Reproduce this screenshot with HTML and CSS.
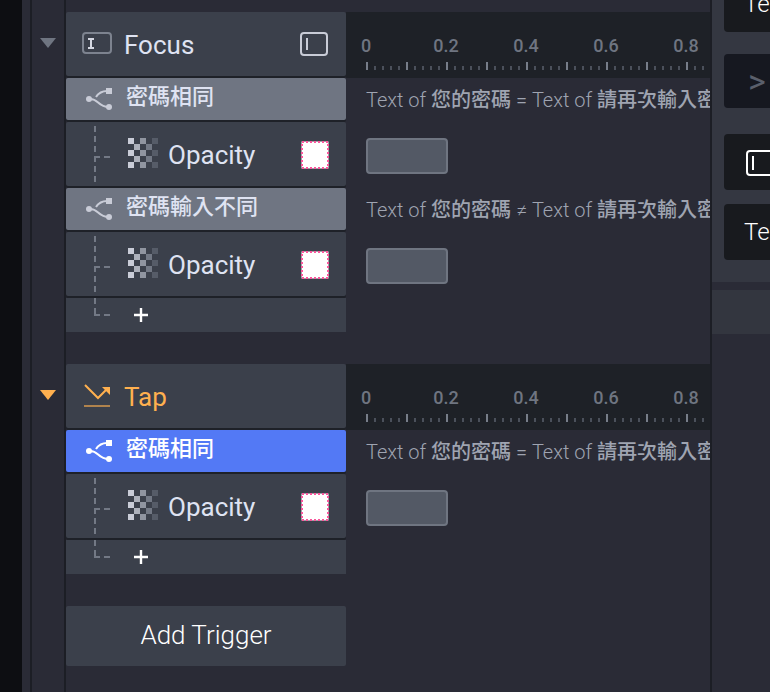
FILE: index.html
```
<!DOCTYPE html>
<html lang="zh-Hant">
<head>
<meta charset="utf-8">
<title>Triggers</title>
<meta name="viewport" content="width=device-width, initial-scale=1">
<link rel="stylesheet" href="styles.css">
</head>
<body>
<svg class="defs" aria-hidden="true">
  <symbol id="branch" viewBox="0 0 28 24">
    <circle cx="4" cy="12" r="3" fill="currentColor"/>
    <rect x="21" y="1" width="6" height="6" fill="currentColor"/>
    <circle cx="24" cy="20" r="3" fill="currentColor"/>
    <path d="M4 12C14 11 12 20 24 20M11 10Q15 4 22 4" fill="none" stroke="currentColor" stroke-width="2"/>
  </symbol>
  <symbol id="checker" viewBox="0 0 30 30">
    <path fill="#c9ccd7" d="M0 0h6v6H0zM0 12h6v6H0zM0 24h6v6H0z"/>
    <path fill="#adb1bb" d="M6 6h6v6H6zM6 18h6v6H6z"/>
    <path fill="#9095a0" d="M12 0h6v6h-6zM12 12h6v6h-6zM12 24h6v6h-6z"/>
    <path fill="#737985" d="M18 6h6v6h-6zM18 18h6v6h-6z"/>
    <path fill="#565c68" d="M24 0h6v6h-6zM24 12h6v6h-6zM24 24h6v6h-6z"/>
  </symbol>
  <symbol id="tree" viewBox="0 0 16 64">
    <path d="M1 4V60" fill="none" stroke="#737985" stroke-width="2" stroke-dasharray="6 4"/>
    <path d="M0 35H16" fill="none" stroke="#737985" stroke-width="2" stroke-dasharray="6 4"/>
  </symbol>
  <symbol id="tree-end" viewBox="0 0 16 34">
    <path d="M1 0V6M1 10V17H6M10 17H16" fill="none" stroke="#737985" stroke-width="2"/>
  </symbol>
  <symbol id="swatch" viewBox="0 0 28 28">
    <rect x="0.5" y="0.5" width="27" height="27" fill="#fff"/>
    <rect x="1" y="1" width="26" height="26" fill="none" stroke="#f9579c" stroke-width="2" stroke-dasharray="2 2"/>
  </symbol>
  <symbol id="plus" viewBox="0 0 14 14">
    <path d="M7 0V14M0 7H14" stroke="currentColor" stroke-width="2.4"/>
  </symbol>
</svg>
<div class="app">
  <div class="canvas-edge"></div>
  <main class="triggers">
    <section class="group">
      <div class="gutter"><button class="toggle" aria-label="Collapse Focus"></button></div>
      <div class="rows">
        <div class="row">
          <header class="cell head">
            <svg class="head-icon" viewBox="0 0 30 26" aria-hidden="true"><rect x="1" y="2" width="28" height="20" rx="3" fill="none" stroke="#7d838f" stroke-width="2"/><path d="M6 8H12M9 8V17M6 17H12" fill="none" stroke="#d5d8e2" stroke-width="2"/></svg>
            <h2>Focus</h2>
            <svg class="target" viewBox="0 0 28 24" aria-hidden="true"><rect x="1" y="1" width="26" height="22" rx="3" fill="none" stroke="#c9ccd7" stroke-width="2"/><path d="M7 6V18" stroke="#c9ccd7" stroke-width="2"/></svg>
          </header>
          <div class="ruler"><div class="labels"><span>0</span><span>0.2</span><span>0.4</span><span>0.6</span><span>0.8</span></div><div class="ticks"></div></div>
        </div>
        <div class="row">
          <div class="cell condition"><svg class="branch" aria-hidden="true"><use href="#branch"/></svg><h3>密碼相同</h3></div>
          <p class="formula">Text of <b>您的密碼</b> = Text of <b>請再次輸入密</b></p>
        </div>
        <div class="row">
          <div class="cell response"><svg class="tree" aria-hidden="true"><use href="#tree"/></svg><svg class="checker" aria-hidden="true"><use href="#checker"/></svg><span class="name">Opacity</span><button class="swatch" aria-label="Layer"><svg aria-hidden="true"><use href="#swatch"/></svg></button></div>
          <div class="track"><div class="bar"></div></div>
        </div>
        <div class="row">
          <div class="cell condition"><svg class="branch" aria-hidden="true"><use href="#branch"/></svg><h3>密碼輸入不同</h3></div>
          <p class="formula">Text of <b>您的密碼</b> ≠ Text of <b>請再次輸入密</b></p>
        </div>
        <div class="row">
          <div class="cell response"><svg class="tree" aria-hidden="true"><use href="#tree"/></svg><svg class="checker" aria-hidden="true"><use href="#checker"/></svg><span class="name">Opacity</span><button class="swatch" aria-label="Layer"><svg aria-hidden="true"><use href="#swatch"/></svg></button></div>
          <div class="track"><div class="bar"></div></div>
        </div>
        <div class="row">
          <div class="cell add"><svg class="tree-end" aria-hidden="true"><use href="#tree-end"/></svg><button class="plus" aria-label="Add response"><svg aria-hidden="true"><use href="#plus"/></svg></button></div>
        </div>
      </div>
    </section>

    <section class="group active">
      <div class="gutter"><button class="toggle" aria-label="Collapse Tap"></button></div>
      <div class="rows">
        <div class="row">
          <header class="cell head">
            <svg class="head-icon" viewBox="0 0 30 26" aria-hidden="true"><path d="M3 2L16 15L25 6" fill="none" stroke="currentColor" stroke-width="2"/><path d="M20 4H28V12Z" fill="currentColor"/><path d="M2 23H28" stroke="currentColor" stroke-width="2" opacity=".6"/></svg>
            <h2>Tap</h2>
          </header>
          <div class="ruler"><div class="labels"><span>0</span><span>0.2</span><span>0.4</span><span>0.6</span><span>0.8</span></div><div class="ticks"></div></div>
        </div>
        <div class="row">
          <div class="cell condition selected"><svg class="branch" aria-hidden="true"><use href="#branch"/></svg><h3>密碼相同</h3></div>
          <p class="formula">Text of <b>您的密碼</b> = Text of <b>請再次輸入密</b></p>
        </div>
        <div class="row">
          <div class="cell response"><svg class="tree" aria-hidden="true"><use href="#tree"/></svg><svg class="checker" aria-hidden="true"><use href="#checker"/></svg><span class="name">Opacity</span><button class="swatch" aria-label="Layer"><svg aria-hidden="true"><use href="#swatch"/></svg></button></div>
          <div class="track"><div class="bar"></div></div>
        </div>
        <div class="row">
          <div class="cell add"><svg class="tree-end" aria-hidden="true"><use href="#tree-end"/></svg><button class="plus" aria-label="Add response"><svg aria-hidden="true"><use href="#plus"/></svg></button></div>
        </div>
      </div>
    </section>

    <section class="group last">
      <div class="gutter"></div>
      <div class="rows"><button class="add-trigger">Add Trigger</button></div>
    </section>
  </main>

  <aside class="inspector">
    <div class="panel">
      <button class="field">Te</button>
      <button class="field operator">&gt;</button>
      <button class="field layer" aria-label="Layer"><svg viewBox="0 0 32 26" aria-hidden="true"><rect x="1" y="1" width="30" height="24" rx="3" fill="none" stroke="#fff" stroke-width="2"/><path d="M7 6V20" stroke="#fff" stroke-width="2"/></svg></button>
      <button class="field">Te</button>
    </div>
    <div class="panel-head"></div>
  </aside>
</div>
</body>
</html>
```
FILE: styles.css
```
* { box-sizing: border-box; }

body {
  margin: 0;
  background: #2a2b36;
  color: #dfe3f2;
  font-family: Roboto, "Noto Sans CJK TC", sans-serif;
  overflow: hidden;
}

h2, h3, p { margin: 0; font-weight: 400; }
svg { display: block; flex: none; }
.defs { position: absolute; width: 0; height: 0; }

button {
  padding: 0;
  border: 0;
  background: none;
  color: inherit;
  font: inherit;
  flex: none;
}

.app { display: flex; height: 100vh; overflow: hidden; }
.canvas-edge { flex: none; width: 22px; background: #0d0e12; }

.triggers {
  flex: 1;
  min-width: 0;
  display: flex;
  flex-direction: column;
  margin-left: 8px;
  border-left: 2px solid #1c1e25;
}

.group { display: flex; flex: none; }
.group.last { flex: 1; }

.gutter {
  flex: none;
  width: 34px;
  border-right: 2px solid #1c1e25;
  padding: 26px 8px 0;
}

.group:first-child .gutter { padding-top: 38px; }
.group:first-child .rows { padding-top: 12px; }

.toggle {
  display: block;
  width: 16px;
  height: 10px;
  background: #6f7581;
  clip-path: polygon(0 0, 100% 0, 50% 100%);
}
.active .toggle { background: #ffb04f; }

.rows { flex: 1; min-width: 0; padding-bottom: 32px; }

.row { display: grid; grid-template-columns: 280px minmax(0, 1fr); }

.cell {
  display: flex;
  align-items: center;
  background: #3b404b;
  border-radius: 2px;
  margin-bottom: 2px;
  box-shadow: 0 2px 0 #1e2128;
}

.head { height: 64px; padding: 0 18px 0 16px; gap: 12px; }
.head h2 { flex: 1; font-size: 26px; line-height: 32px; padding-top: 2px; }
.head-icon { width: 30px; height: 26px; }
.target { width: 28px; height: 24px; }
.active .head { color: #ffb04f; }

.condition {
  height: 42px;
  padding-left: 19px;
  gap: 13px;
  background: #6f7582;
  color: #c9ccd7;
}
.condition h3 { font-size: 22px; font-weight: 500; line-height: 32px; padding-bottom: 4px; color: #dfe3f2; }
.condition.selected { background: #5379f5; color: #fff; }
.condition.selected h3 { color: #fff; }
.branch { width: 28px; height: 24px; }

.response { height: 64px; padding: 0 17px 0 28px; }
.tree { width: 16px; height: 64px; }
.checker { width: 30px; height: 30px; margin: 0 10px 2px 18px; }
.name { flex: 1; font-size: 26px; line-height: 32px; padding-top: 2px; }
.swatch { padding-top: 2px; }
.swatch svg { width: 28px; height: 28px; }

.add { height: 34px; padding-left: 28px; gap: 24px; margin-bottom: 0; box-shadow: none; border-radius: 0; color: #fff; }
.tree-end { width: 16px; height: 34px; }
.plus, .plus svg { width: 14px; height: 14px; }

.ruler { background: #1e2127; padding-top: 24px; overflow: hidden; }
.labels {
  display: flex;
  margin-left: -20px;
  color: #6f7581;
  font-size: 18px;
  font-weight: 500;
  line-height: 20px;
}
.labels span { flex: none; width: 80px; text-align: center; }
.ticks {
  height: 8px;
  margin: 6px 0 0 20px;
  background:
    repeating-linear-gradient(90deg, #777d89 0 2px, transparent 2px 40px),
    repeating-linear-gradient(90deg, #4b505b 0 2px, transparent 2px 8px) 0 4px no-repeat;
}

.formula {
  padding-left: 20px;
  overflow: hidden;
  white-space: nowrap;
  color: #9fa4b1;
  font-size: 20px;
  font-weight: 300;
  line-height: 44px;
}
.formula b { font-weight: 500; }

.track { padding: 16px 20px 0; }
.bar {
  width: 82px;
  height: 36px;
  background: #535965;
  border: 2px solid #6f7581;
  border-radius: 4px;
}

.add-trigger {
  display: block;
  width: 280px;
  height: 60px;
  padding-bottom: 2px;
  background: #3b404b;
  border-radius: 2px;
  color: #fff;
  font-size: 26px;
  font-weight: 300;
}

.inspector { flex: none; width: 60px; border-left: 2px solid #1c1e25; }
.panel {
  display: flex;
  flex-direction: column;
  background: #343741;
  margin-top: -24px;
  padding: 0 0 22px 12px;
}
.field {
  height: 56px;
  margin-bottom: 14px;
  padding-left: 20px;
  overflow: hidden;
  background: #181a1e;
  border-radius: 4px 0 0 4px;
  color: #fff;
  font-size: 24px;
  font-weight: 300;
  text-align: left;
}
.field:last-child { margin-bottom: 0; }
.operator {
  height: 54px;
  margin: 8px 0 26px;
  padding-left: 24px;
  background: #161820;
  color: #5a5f6b;
  font-size: 34px;
  font-weight: 400;
}
.layer { padding: 2px 0 0 22px; }
.layer svg { width: 32px; height: 26px; }
.panel-head { height: 44px; margin-top: 8px; background: #33363f; }
```
